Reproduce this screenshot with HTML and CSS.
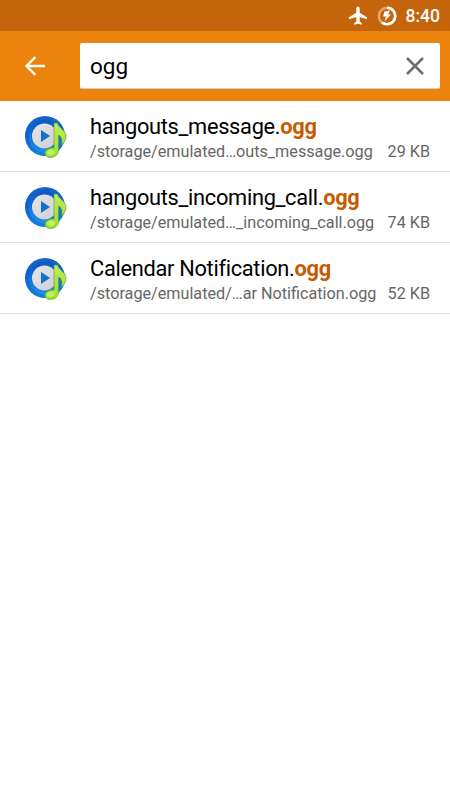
FILE: index.html
```
<!DOCTYPE html>
<html lang="en">
<head>
    <meta charset="UTF-8">
    <meta name="viewport" content="width=device-width, initial-scale=1.0">
    <title>Search</title>
    <link rel="stylesheet" href="styles.css">
</head>
<body>
    <!-- Shared icon for audio files -->
    <svg class="defs" width="0" height="0">
        <defs>
            <linearGradient id="ring" x1="0" y1="0" x2="0" y2="1">
                <stop offset="0" stop-color="#1464c4"/>
                <stop offset="0.5" stop-color="#0b62d4"/>
                <stop offset="1" stop-color="#1383d8"/>
            </linearGradient>
            <linearGradient id="inner" x1="0" y1="0" x2="0" y2="1">
                <stop offset="0" stop-color="#0c58c4"/>
                <stop offset="1" stop-color="#1c8ce8"/>
            </linearGradient>
            <linearGradient id="disc" x1="0" y1="0" x2="1" y2="1">
                <stop offset="0" stop-color="#e6e6ea"/>
                <stop offset="1" stop-color="#ccced4"/>
            </linearGradient>
            <linearGradient id="note" x1="0" y1="0" x2="0" y2="1">
                <stop offset="0" stop-color="#c0ec58"/>
                <stop offset="1" stop-color="#98e028"/>
            </linearGradient>
        </defs>
        <symbol id="audio" viewBox="0 0 44 44">
            <circle cx="21" cy="21" r="20" fill="url(#ring)"/>
            <circle cx="21" cy="21" r="14.500" fill="none" stroke="url(#inner)" stroke-width="4"/>
            <circle cx="20.5" cy="21" r="12.500" fill="url(#disc)"/>
            <path d="M17 15v12l9-6z" fill="#1470cc"/>
            <path d="M30 8h3.500c1 5 8.500 7.500 8.500 13c0 4-2 7-4.500 9c.8-5 .3-8.500-3-10V35.500c0 4-3.500 7-8 7c-3.500 0-5.500-2-5.500-4.500c0-3 4-5.500 9-5z" fill="url(#note)" stroke="#55982c" stroke-width=".6"/>
            <ellipse cx="27" cy="37.500" rx="4" ry="2.500" fill="#c4f25c" transform="rotate(-15 27 37.500)"/>
        </symbol>
    </svg>

    <div class="status-bar">
        <svg class="plane" width="20" height="20" viewBox="0 0 20 20">
            <path d="M19 13.200v-1.900l-7.300-4.600V2.400C11.700 1.400 11 .8 10 .8S8.300 1.400 8.300 2.400v4.300L1 11.300v1.900l7.300-2.200v4.600l-2.100 1.600v1.500l3.800-1 3.800 1v-1.500l-2.100-1.600V11z" fill="#fff"/>
        </svg>
        <svg class="battery" width="20" height="20" viewBox="0 0 20 20">
            <circle cx="10" cy="10" r="8.200" fill="none" stroke="#e0a878" stroke-width="2.600"/>
            <path d="M10 1.800a8.200 8.200 0 1 1-5 14.700" fill="none" stroke="#fff" stroke-width="2.600"/>
            <path d="M13 4.500L7.500 5.500 6 10.500h3l-1.500 5 6.500-7h-3z" fill="#fff"/>
        </svg>
        <span class="clock">8:40</span>
    </div>

    <div class="toolbar">
        <svg class="back" width="20" height="20" viewBox="0 0 20 20">
            <path d="M20 10H1.800M10.500 1L1.500 10l9 9" fill="none" stroke="#fff" stroke-width="2.300"/>
        </svg>
        <div class="search-box">
            <span>ogg</span>
            <svg width="18" height="18" viewBox="0 0 18 18">
                <path d="M1 1l16 16M17 1L1 17" stroke="#6e6e6e" stroke-width="2.500"/>
            </svg>
        </div>
    </div>

    <div class="results">
        <div class="row">
            <svg class="icon"><use href="#audio"/></svg>
            <div class="info">
                <div class="name">hangouts_message.<b>ogg</b></div>
                <div class="details"><span>/storage/emulated…outs_message.ogg</span><span>29 KB</span></div>
            </div>
        </div>
        <div class="row">
            <svg class="icon"><use href="#audio"/></svg>
            <div class="info">
                <div class="name">hangouts_incoming_call.<b>ogg</b></div>
                <div class="details"><span>/storage/emulated…_incoming_call.ogg</span><span>74 KB</span></div>
            </div>
        </div>
        <div class="row">
            <svg class="icon"><use href="#audio"/></svg>
            <div class="info">
                <div class="name">Calendar Notification.<b>ogg</b></div>
                <div class="details"><span>/storage/emulated/…ar Notification.ogg</span><span>52 KB</span></div>
            </div>
        </div>
    </div>
</body>
</html>
```
FILE: styles.css
```
* {
    box-sizing: border-box;
}
body {
    margin: 0;
    font-family: Roboto, sans-serif;
    background-color: #fff;
    color: #000;
}
svg {
    display: block;
    flex: none;
}
.defs {
    position: absolute;
}
.status-bar {
    display: flex;
    align-items: center;
    justify-content: flex-end;
    height: 31px;
    padding-right: 10px;
    background-color: #c4640b;
    color: #fff;
}
.battery {
    margin: 0 9px 0 9px;
}
.clock {
    font-size: 17.5px;
    font-weight: 500;
    line-height: 31px;
    padding-top: 2px;
}
.toolbar {
    display: flex;
    align-items: center;
    height: 70px;
    padding: 0 10px 0 25px;
    background-color: #eb830c;
}
.search-box {
    display: flex;
    align-items: center;
    justify-content: space-between;
    flex: 1;
    height: 46px;
    margin-left: 35px;
    padding: 0 16px 0 10px;
    background-color: #fff;
    border-bottom: 1px solid #c9cdd0;
    border-radius: 2px;
    font-size: 22.5px;
}
.row {
    display: flex;
    height: 71px;
    padding: 0 20px 0 24px;
    border-bottom: 1px solid #dcdcdc;
}
.icon {
    width: 44px;
    height: 44px;
    margin-top: 14px;
}
.info {
    flex: 1;
    margin-left: 22px;
    padding-top: 12px;
}
.name {
    font-size: 21.8px;
    line-height: 27px;
    letter-spacing: -0.3px;
    font-variant-ligatures: common-ligatures;
    white-space: nowrap;
}
.name b {
    color: #c85a00;
}
.details {
    display: flex;
    justify-content: space-between;
    font-size: 16.2px;
    line-height: 24px;
    color: #666;
    white-space: nowrap;
}
```
